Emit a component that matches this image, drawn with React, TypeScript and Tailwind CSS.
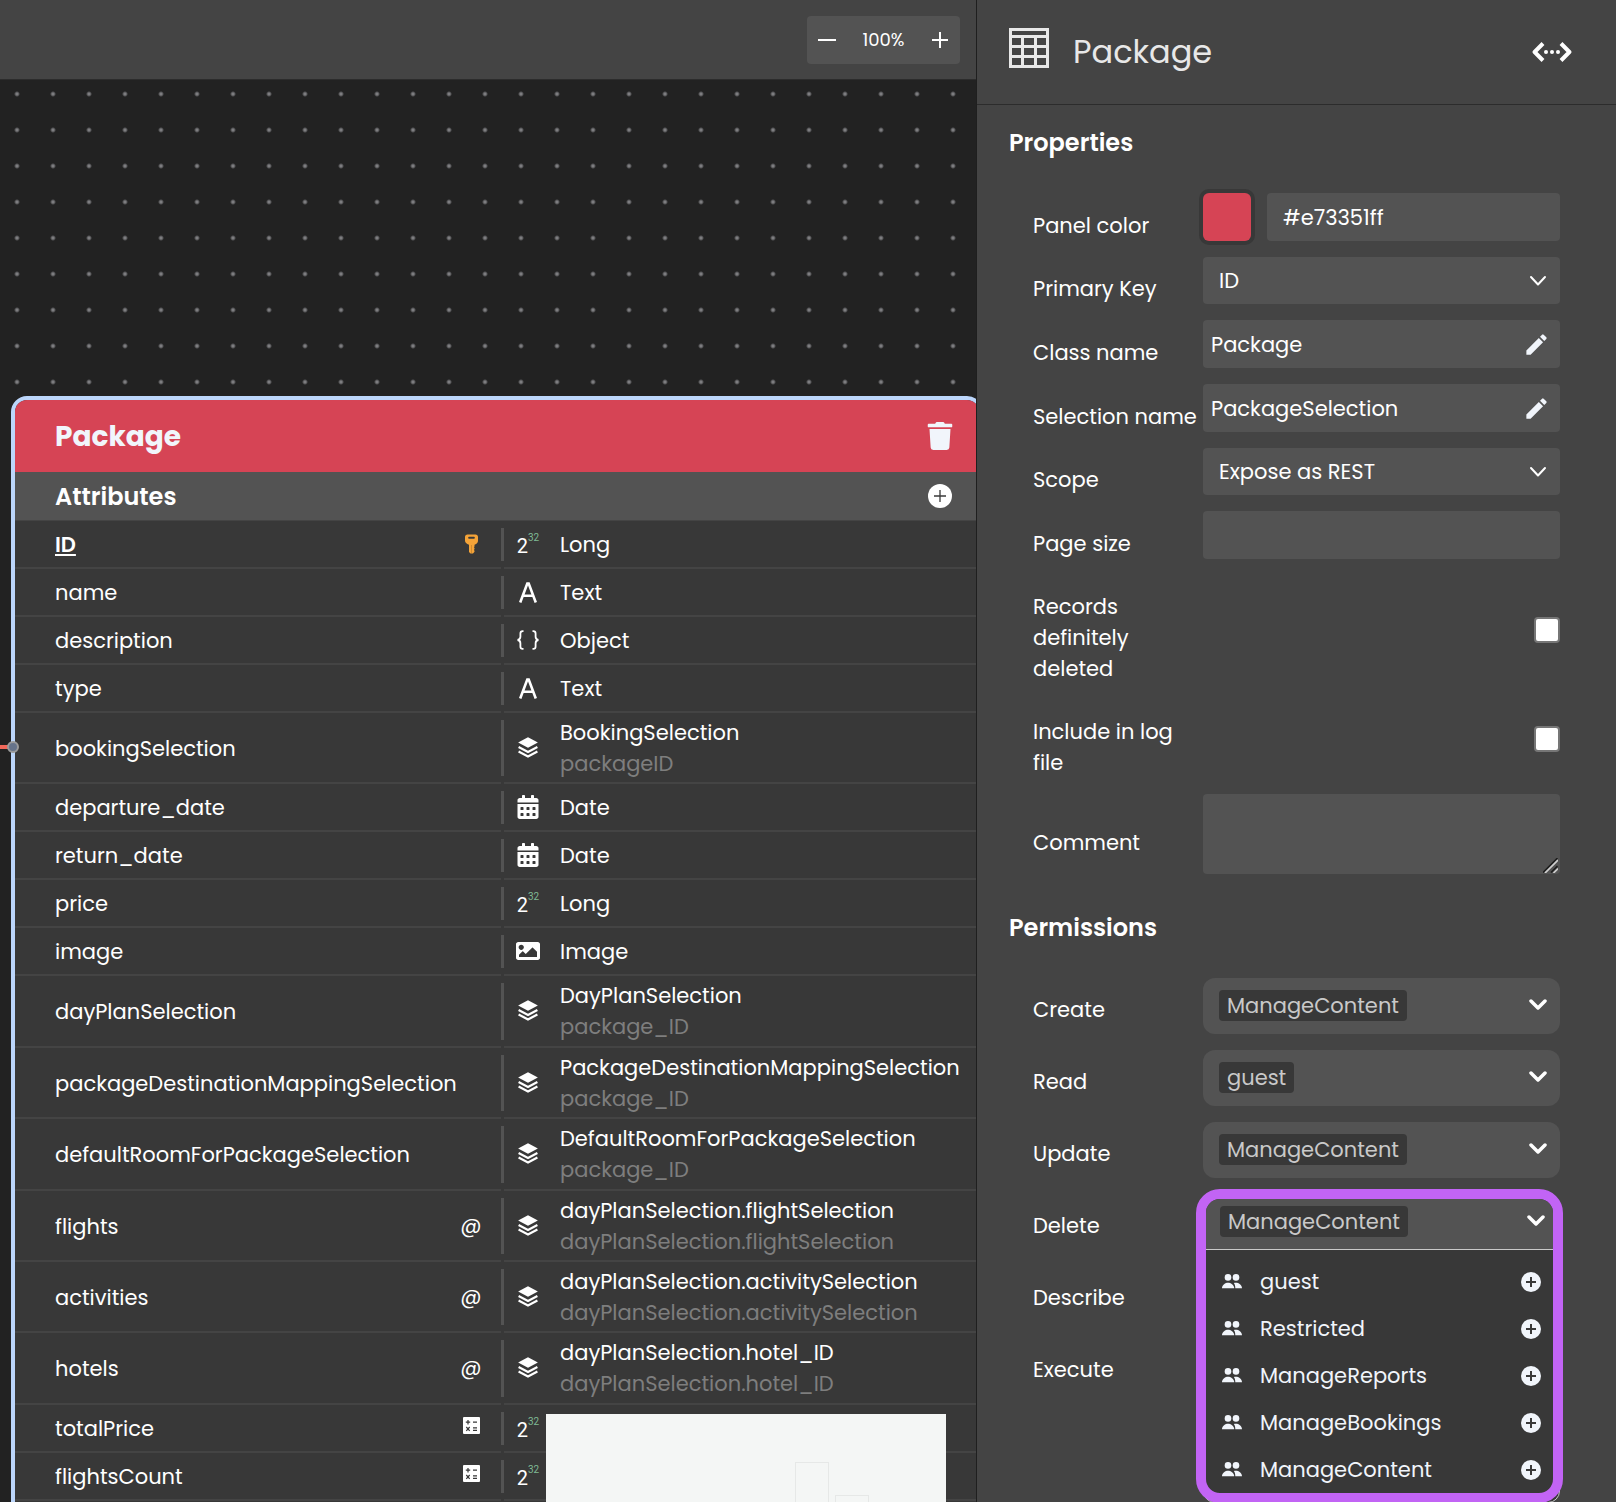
import type { ReactNode } from "react";
import { FaCalendarAlt, FaImage, FaTrash } from "react-icons/fa";
import { MdEdit } from "react-icons/md";

/* ---------- icons ---------- */

function TableIcon() {
  return (
    <svg viewBox="0 0 40 40" className="mb-2 h-10 w-10 shrink-0 fill-[#e8e8e8]" aria-hidden="true">
      <path
        fillRule="evenodd"
        d="M0 0h40v40H0zM3 3v4h34V3zM3 10v7h9v-7zM15 10v7h10v-7zM28 10v7h9v-7zM3 20v7h9v-7zM15 20v7h10v-7zM28 20v7h9v-7zM3 30v7h9v-7zM15 30v7h10v-7zM28 30v7h9v-7z"
      />
    </svg>
  );
}

function ResizeIcon() {
  return (
    <svg viewBox="0 0 40 22" className="h-[22px] w-10" aria-hidden="true">
      <g fill="none" stroke="white" strokeWidth="4" strokeLinejoin="round">
        <path d="M11 2.5 2.6 11 11 19.5" />
        <path d="M29 2.5 37.4 11 29 19.5" />
      </g>
      <g fill="white">
        <circle cx="14" cy="11" r="2" />
        <circle cx="20" cy="11" r="2" />
        <circle cx="26" cy="11" r="2" />
      </g>
    </svg>
  );
}

function PlusCircle({ size, stroke, color }: { size: number; stroke: number; color: string }) {
  return (
    <svg width={size} height={size} viewBox="0 0 24 24" aria-hidden="true">
      <circle cx="12" cy="12" r="12" fill={color} />
      <path d="M6 12h12M12 6v12" stroke="#3a3a3a" strokeWidth={stroke} />
    </svg>
  );
}

function PeopleIcon() {
  return (
    <svg viewBox="0 0 20 15" className="h-[15px] w-5 fill-current" aria-hidden="true">
      <circle cx="6" cy="3.4" r="3.3" />
      <circle cx="14" cy="3.4" r="3.3" />
      <path d="M0 14.3c0-3.5 3.5-5.5 6-5.5s6.2 2 6.2 5.5z" />
      <path d="M11.8 9.1c.7-.2 1.5-.3 2.2-.3 2.5 0 6 2 6 5.5h-6.700c0-2.200-.4-3.800-1.500-5.200z" />
    </svg>
  );
}

function LayersIcon() {
  return (
    <svg viewBox="0 0 20 22" className="h-[22px] w-5" aria-hidden="true">
      <path d="M10 .3 19.9 5.5 10 10.7.1 5.5z" fill="white" />
      <path
        d="M.6 10.1 10 15l9.4-4.900M.6 14.500 10 19.400l9.400-4.900"
        fill="none"
        stroke="white"
        strokeWidth="2.2"
      />
    </svg>
  );
}

function BracesIcon() {
  return (
    <svg viewBox="0 0 22 20" className="h-5 w-[22px]" fill="none" stroke="white" strokeWidth="1.8" aria-hidden="true">
      <path d="M6.500 1.200h-.8C4.100 1.200 3.400 2 3.400 3.600v3.200C3.400 8.600 2.600 9.600.600 10c2 .4 2.800 1.400 2.800 3.200v3.200c0 1.600.7 2.400 2.300 2.400h.8" />
      <path d="M15.500 1.200h.8c1.600 0 2.300.8 2.300 2.400v3.200c0 1.800.8 2.800 2.800 3.200-2 .4-2.800 1.400-2.800 3.200v3.200c0 1.600-.7 2.400-2.300 2.400h-.8" />
    </svg>
  );
}

function LongIcon() {
  return (
    <span className="flex h-6 items-start font-['Roboto',sans-serif] text-xl leading-7 text-white" aria-hidden="true">
      2<span className="text-[10px] leading-3 text-[#7fba95]">32</span>
    </span>
  );
}

function TextIcon() {
  return (
    <svg viewBox="0 0 18 21" className="h-[21px] w-[18px]" fill="none" stroke="white" strokeWidth="2.6" aria-hidden="true">
      <path d="M1.2 20.5 8.3 1.5h1.4l7.1 19M4 13.8h10" />
    </svg>
  );
}

function KeyIcon() {
  return (
    <svg viewBox="0 0 13 20" className="h-5 w-[13px]" aria-hidden="true">
      <path
        fillRule="evenodd"
        d="M2.5.5h8C12 .5 13 1.5 13 3v3.5c0 2-1 3.500-3.500 4.300v1.700l-.6.8.6.8v1l-.6.8.6.8v1L8 19.500H5.500l-1.500-1.500v-7.200C1.500 10 0 8.500 0 6.500V3C0 1.500 1 .5 2.500.5zM4 2.800c-.5 0-.8.300-.8.800v.4c0 .5.300.8.8.8h5c.5 0 .8-.3.8-.8v-.4c0-.5-.3-.8-.8-.8z"
        fill="#f4a338"
      />
      <path d="M6.5 11v8" stroke="#cf8a2e" />
    </svg>
  );
}

function CalcIcon() {
  return (
    <svg viewBox="0 0 17 17" className="mb-1.5 h-[17px] w-[17px]" aria-hidden="true">
      <rect width="17" height="17" rx="1" fill="white" />
      <path
        d="M5 3v4.5M2.8 5.2h4.4M10 5.2h4M3.3 10l3.4 3.8M6.7 10l-3.4 3.8M10 10.8h4M10 13.3h4"
        stroke="#383838"
        strokeWidth="1.2"
      />
    </svg>
  );
}

function Chevron({ bold = false }: { bold?: boolean }) {
  return (
    <svg
      viewBox="0 0 18 12"
      className="h-3 w-[18px] shrink-0"
      fill="none"
      stroke="white"
      strokeWidth={bold ? 3.5 : 2}
      strokeLinecap="round"
      strokeLinejoin="round"
      aria-hidden="true"
    >
      <path d={bold ? "M2 2 9 9l7-7" : "M2 2l7 7.5L16 2"} />
    </svg>
  );
}

function ResizeGrip() {
  return (
    <svg viewBox="0 0 15 15" className="pointer-events-none absolute right-0.5 bottom-px h-[15px] w-[15px]" aria-hidden="true">
      <path d="M0 14.5 14.5 0M8 14.5 14.5 8" stroke="#1c1c1c" strokeWidth="1.5" />
      <path d="M2 15 15 2M10.5 15l4.5-4.5" stroke="#cfcfcf" strokeWidth="1.7" />
    </svg>
  );
}

/* ---------- canvas card ---------- */

type Kind = "long" | "text" | "object" | "selection" | "date" | "image";
type Attribute = {
  name: string;
  kind: Kind;
  type: string;
  detail?: string;
  mark?: "key" | "alias" | "calc";
  height: string;
};

const ROW = "h-12";
const ROW_TALL = "h-[71px]";
const ROW_TALLER = "h-[72px]";

const attributes: Attribute[] = [
  { name: "ID", kind: "long", type: "Long", mark: "key", height: ROW },
  { name: "name", kind: "text", type: "Text", height: ROW },
  { name: "description", kind: "object", type: "Object", height: ROW },
  { name: "type", kind: "text", type: "Text", height: ROW },
  { name: "bookingSelection", kind: "selection", type: "BookingSelection", detail: "packageID", height: ROW_TALL },
  { name: "departure_date", kind: "date", type: "Date", height: ROW },
  { name: "return_date", kind: "date", type: "Date", height: ROW },
  { name: "price", kind: "long", type: "Long", height: ROW },
  { name: "image", kind: "image", type: "Image", height: ROW },
  { name: "dayPlanSelection", kind: "selection", type: "DayPlanSelection", detail: "package_ID", height: ROW_TALLER },
  {
    name: "packageDestinationMappingSelection",
    kind: "selection",
    type: "PackageDestinationMappingSelection",
    detail: "package_ID",
    height: ROW_TALL,
  },
  {
    name: "defaultRoomForPackageSelection",
    kind: "selection",
    type: "DefaultRoomForPackageSelection",
    detail: "package_ID",
    height: ROW_TALLER,
  },
  {
    name: "flights",
    kind: "selection",
    type: "dayPlanSelection.flightSelection",
    detail: "dayPlanSelection.flightSelection",
    mark: "alias",
    height: ROW_TALL,
  },
  {
    name: "activities",
    kind: "selection",
    type: "dayPlanSelection.activitySelection",
    detail: "dayPlanSelection.activitySelection",
    mark: "alias",
    height: ROW_TALL,
  },
  {
    name: "hotels",
    kind: "selection",
    type: "dayPlanSelection.hotel_ID",
    detail: "dayPlanSelection.hotel_ID",
    mark: "alias",
    height: ROW_TALLER,
  },
  { name: "totalPrice", kind: "long", type: "Long", mark: "calc", height: ROW },
  { name: "flightsCount", kind: "long", type: "Long", mark: "calc", height: ROW },
];

const kindIcons: Record<Kind, ReactNode> = {
  long: <LongIcon />,
  text: <TextIcon />,
  object: <BracesIcon />,
  selection: <LayersIcon />,
  date: <FaCalendarAlt size={24} aria-hidden="true" />,
  image: <FaImage size={24} aria-hidden="true" />,
};

const marks: Record<"key" | "alias" | "calc", ReactNode> = {
  key: <KeyIcon />,
  alias: <span>@</span>,
  calc: <CalcIcon />,
};

function AttributeRow({ attribute }: { attribute: Attribute }) {
  const { name, kind, type, detail, mark, height } = attribute;
  return (
    <tr className={`flex ${height}`}>
      <td className="flex w-[486px] items-center border-b-2 border-[#444444] pl-10">
        <span className={`flex-1 pt-0.5 ${mark === "key" ? "font-semibold underline decoration-2 underline-offset-2" : ""}`}>
          {name}
        </span>
        {mark && <span className="flex w-[60px] justify-center">{marks[mark]}</span>}
      </td>
      <td className="flex flex-1">
        <span className="mt-[7px] mb-2 w-[3px] bg-[#535353]" />
        <div className="flex flex-1 items-center gap-2 border-b-2 border-[#444444]">
          <span className="flex w-12 justify-center">{kindIcons[kind]}</span>
          <span className="flex flex-col leading-[31px]">
            <span>{type}</span>
            {detail && <span className="text-[#7e7e7e]">{detail}</span>}
          </span>
        </div>
      </td>
    </tr>
  );
}

function ClassCard() {
  return (
    <section className="absolute top-[316px] left-[11px] w-[972px] rounded-2xl border-4 border-[#bcd6fb] bg-[#383838] pb-10">
      <header className="flex h-[72px] items-center justify-between rounded-t-xl bg-[#d64455] pr-[25px] pl-10">
        <h2 className="pt-0.5 text-[28px] font-bold text-[#f1f5fb]">Package</h2>
        <button type="button" aria-label="Delete class" className="text-[#f1f5fb]">
          <FaTrash size={28} />
        </button>
      </header>
      <div className="flex h-[49px] items-center justify-between border-b border-[#444444] bg-[#535353] pr-[27px] pl-10">
        <h3 className="pt-0.5 text-2xl font-semibold">Attributes</h3>
        <button type="button" aria-label="Add attribute">
          <PlusCircle size={24} stroke={1.3} color="#ffffff" />
        </button>
      </div>
      <table className="block">
        <tbody className="block">
          {attributes.map((attribute) => (
            <AttributeRow key={attribute.name} attribute={attribute} />
          ))}
        </tbody>
      </table>
      <span className="absolute top-[341px] -left-2 h-3 w-3 rounded-full border-2 border-[#9a9a9a] bg-[#66738a]" />
    </section>
  );
}

/* ---------- properties panel ---------- */

function Field({ label, id, children }: { label: string; id: string; children: ReactNode }) {
  return (
    <div className="grid grid-cols-[170px_minmax(0,1fr)] items-center">
      <label htmlFor={id} className="pt-4 leading-[31px]">
        {label}
      </label>
      {children}
    </div>
  );
}

function SelectBox({ id, value }: { id: string; value: string }) {
  return (
    <div className="relative flex items-center">
      <select id={id} className="h-[47px] w-full appearance-none rounded-sm bg-[#535353] px-4">
        <option>{value}</option>
      </select>
      <span className="pointer-events-none absolute right-[13px]">
        <Chevron />
      </span>
    </div>
  );
}

function EditableName({ id, value }: { id: string; value: string }) {
  return (
    <div className="flex h-12 items-center rounded-sm bg-[#535353] pr-2.5 pl-2">
      <input id={id} defaultValue={value} className="min-w-0 flex-1 bg-transparent pt-0.5 outline-none" />
      <button type="button" aria-label={`Edit ${value}`} className="text-[#f1f5fb]">
        <MdEdit size={27} />
      </button>
    </div>
  );
}

function Chip({ text }: { text: string }) {
  return <span className="rounded-sm bg-[#383838] px-2 leading-[31px] text-[#c9c9c9]">{text}</span>;
}

function PermissionRow({ label, children }: { label: string; children?: ReactNode }) {
  return (
    <div className="grid h-14 grid-cols-[170px_minmax(0,1fr)] items-center">
      <span className="pt-2">{label}</span>
      {children}
    </div>
  );
}

function PermissionBox({ label, value }: { label: string; value: string }) {
  return (
    <button
      type="button"
      aria-label={`${label}: ${value}`}
      aria-haspopup="listbox"
      className="flex h-14 items-center justify-between rounded-xl bg-[#535353] pr-[13px] pb-0.5 pl-4"
    >
      <Chip text={value} />
      <Chevron bold />
    </button>
  );
}

const roles = ["guest", "Restricted", "ManageReports", "ManageBookings", "ManageContent"];

function OpenPermissionBox() {
  return (
    <div className="relative h-full">
      <div className="absolute top-[200px] right-0 left-0 h-[109px] rounded-xl border border-[#c9c9c9] bg-[#383838]" />
      <div className="absolute -top-[5px] -right-[3px] -left-[7px] overflow-hidden rounded-3xl border-10 border-[#c264f5] bg-[#383838]">
        <button
          type="button"
          aria-label="Delete: ManageContent"
          aria-haspopup="listbox"
          aria-expanded="true"
          className="flex h-[51px] w-full items-center justify-between border-b border-[#c9c9c9] bg-[#535353] pr-2 pb-1.5 pl-3.5"
        >
          <Chip text="ManageContent" />
          <Chevron bold />
        </button>
        <ul className="pt-2">
          {roles.map((role) => (
            <li key={role} className="flex h-[47px] items-center gap-[18px] pr-3 pl-4 text-[#f1f5fb]">
              <PeopleIcon />
              <span className="flex-1">{role}</span>
              <button type="button" aria-label={`Add ${role}`}>
                <PlusCircle size={20} stroke={2.4} color="#f1f5fb" />
              </button>
            </li>
          ))}
        </ul>
      </div>
    </div>
  );
}

function PropertiesPanel() {
  return (
    <aside className="w-[640px] shrink-0 overflow-hidden border-l border-[#1f1f1f] bg-[#444444]">
      <header className="flex h-[105px] items-center gap-6 border-b border-[#2c2c2c] pr-11 pl-8">
        <TableIcon />
        <h1 className="flex-1 text-[32px] text-[#e8e8e8]">Package</h1>
        <button type="button" aria-label="Resize panel">
          <ResizeIcon />
        </button>
      </header>

      <form className="pt-5 pr-14 pl-8">
        <h2 className="mb-8 text-2xl leading-9 font-semibold">Properties</h2>
        <div className="flex flex-col gap-4 pl-6">
          <Field label="Panel color" id="panel-color">
            <div className="flex gap-4">
              <button
                type="button"
                aria-label="Pick color"
                className="h-12 w-12 rounded-md bg-[#d64455] ring-4 ring-[#383838]"
              />
              <input id="panel-color" defaultValue="#e73351ff" className="h-12 min-w-0 flex-1 rounded-sm bg-[#535353] px-4" />
            </div>
          </Field>
          <Field label="Primary Key" id="primary-key">
            <SelectBox id="primary-key" value="ID" />
          </Field>
          <Field label="Class name" id="class-name">
            <EditableName id="class-name" value="Package" />
          </Field>
          <Field label="Selection name" id="selection-name">
            <EditableName id="selection-name" value="PackageSelection" />
          </Field>
          <Field label="Scope" id="scope">
            <SelectBox id="scope" value="Expose as REST" />
          </Field>
          <Field label="Page size" id="page-size">
            <input id="page-size" className="h-12 w-full rounded-sm bg-[#535353] px-4" />
          </Field>
          <Field label="Records definitely deleted" id="records-deleted">
            <input
              id="records-deleted"
              type="checkbox"
              className="h-[26px] w-[26px] appearance-none justify-self-end rounded-sm border-2 border-[#767676] bg-white"
            />
          </Field>
          <Field label="Include in log file" id="include-log">
            <input
              id="include-log"
              type="checkbox"
              className="h-[26px] w-[26px] appearance-none justify-self-end rounded-sm border-2 border-[#767676] bg-white"
            />
          </Field>
          <Field label="Comment" id="comment">
            <div className="relative">
              <textarea id="comment" className="block h-20 w-full resize-none rounded-sm bg-[#535353] px-4" />
              <ResizeGrip />
            </div>
          </Field>
        </div>

        <h2 className="mt-9 mb-8 text-2xl leading-9 font-semibold">Permissions</h2>
        <div className="flex flex-col gap-4 pl-6">
          <PermissionRow label="Create">
            <PermissionBox label="Create" value="ManageContent" />
          </PermissionRow>
          <PermissionRow label="Read">
            <PermissionBox label="Read" value="guest" />
          </PermissionRow>
          <PermissionRow label="Update">
            <PermissionBox label="Update" value="ManageContent" />
          </PermissionRow>
          <PermissionRow label="Delete">
            <OpenPermissionBox />
          </PermissionRow>
          <PermissionRow label="Describe" />
          <PermissionRow label="Execute" />
        </div>
      </form>
    </aside>
  );
}

/* ---------- page ---------- */

export default function App() {
  return (
    <div className="flex h-screen overflow-hidden bg-[#222222] font-['Poppins','Inter',sans-serif] text-[21px] text-white">
      <main className="flex min-w-0 flex-1 flex-col">
        <div className="flex h-20 items-center justify-end border-b border-[#2c2c2c] bg-[#444444] pr-4">
          <div className="flex h-12 w-[153px] items-center justify-between rounded-sm bg-[#535353] px-[11px]">
            <button type="button" aria-label="Zoom out">
              <svg viewBox="0 0 18 18" className="h-[18px] w-[18px]" aria-hidden="true">
                <path d="M0 9h18" stroke="white" strokeWidth="2" />
              </svg>
            </button>
            <span className="text-lg">100%</span>
            <button type="button" aria-label="Zoom in">
              <svg viewBox="0 0 18 18" className="h-[18px] w-[18px]" aria-hidden="true">
                <path d="M1 9h16M9 1v16" stroke="white" strokeWidth="2" />
              </svg>
            </button>
          </div>
        </div>
        <div className="relative flex-1 overflow-hidden bg-[radial-gradient(circle_at_center,#7d7d80_1px,transparent_3px)] bg-[length:36px_36px] bg-[position:-1px_-4px]">
          <span className="absolute top-[665px] left-0 h-1 w-2 bg-[#f2685a]" />
          <ClassCard />
          <svg
            viewBox="0 0 400 88"
            className="absolute right-[30px] bottom-0 h-[88px] w-[400px] bg-[#f4f6f5]"
            fill="none"
            stroke="#e6e8e7"
            role="img"
            aria-label="Canvas overview"
          >
            <rect x="249.5" y="48.5" width="33" height="60" />
            <rect x="289.5" y="81.5" width="33" height="60" />
          </svg>
        </div>
      </main>
      <PropertiesPanel />
    </div>
  );
}
